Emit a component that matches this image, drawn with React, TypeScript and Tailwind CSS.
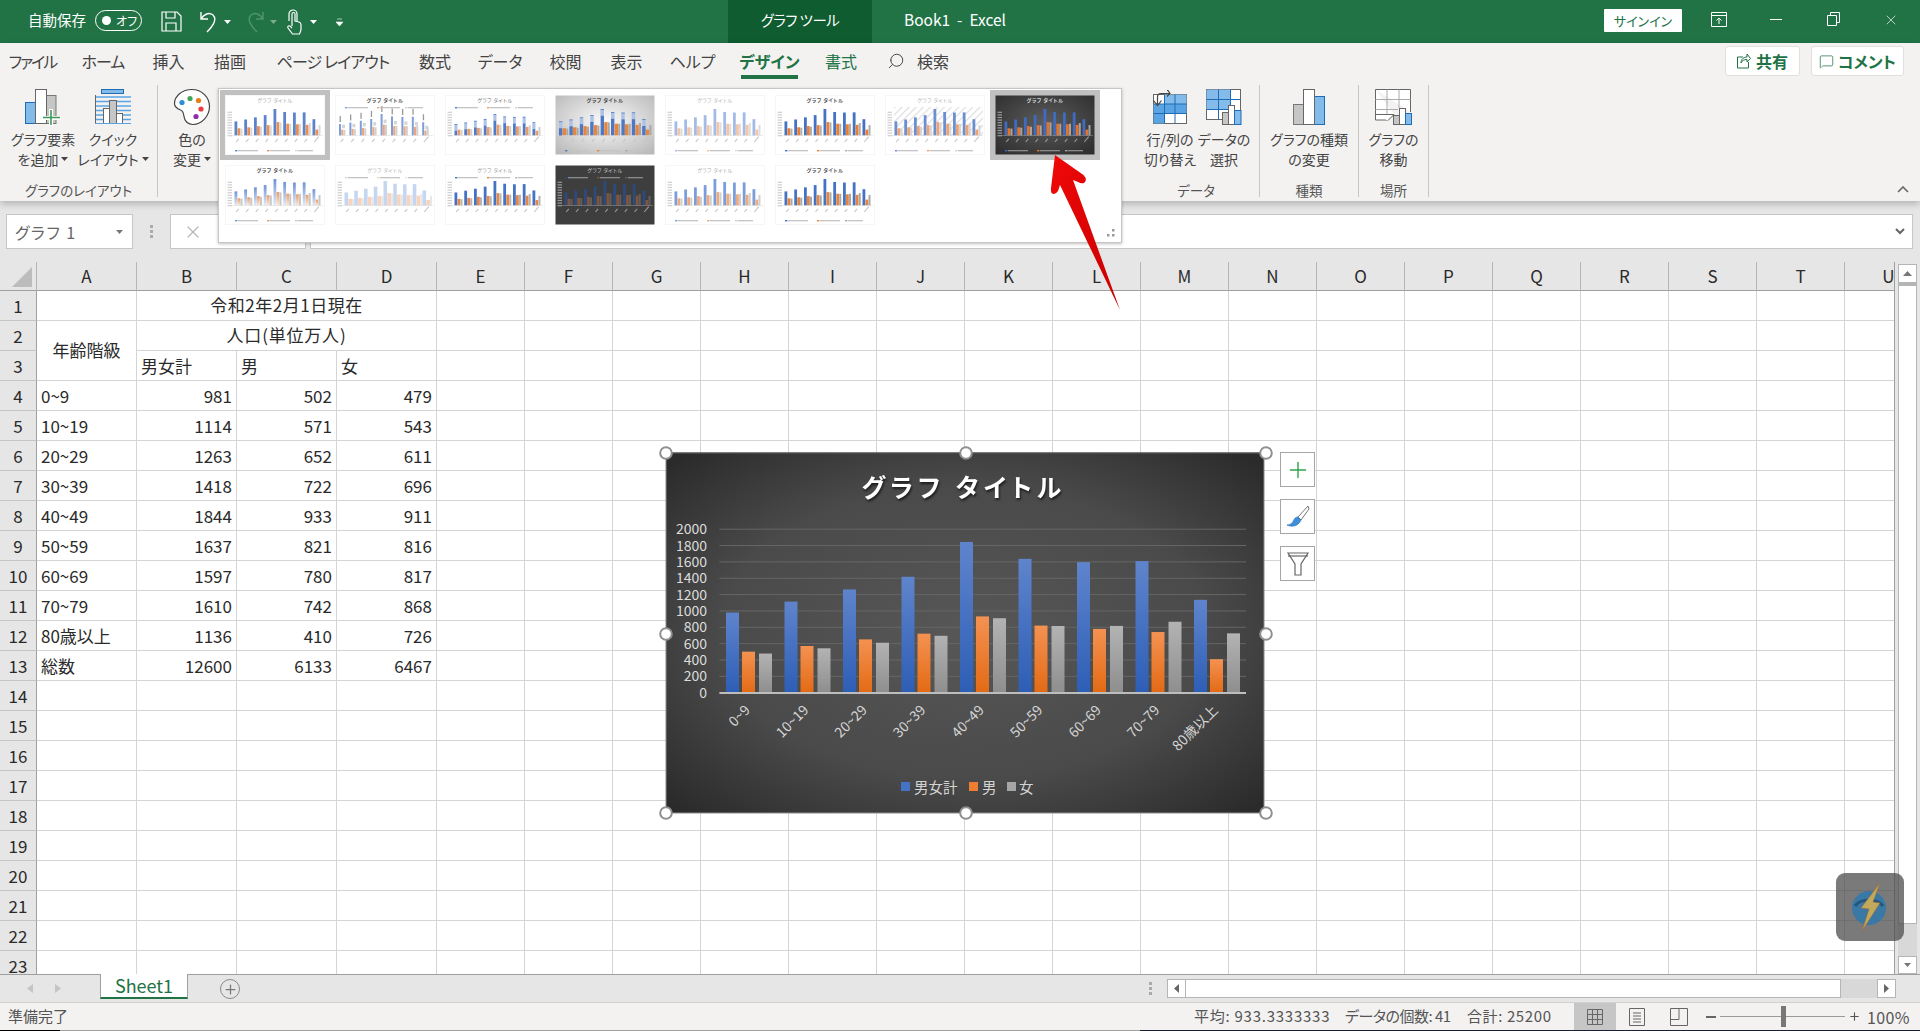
import React from "react";
import { Search, MessageSquare, Plus, X } from "lucide-react";

const FONT = "font-['Noto_Sans_CJK_JP','Liberation_Sans',sans-serif]";
const cats = ["0~9", "10~19", "20~29", "30~39", "40~49", "50~59", "60~69", "70~79", "80歳以上"];
const blue = [981, 1114, 1263, 1418, 1844, 1637, 1597, 1610, 1136];
const orange = [502, 571, 652, 722, 933, 821, 780, 742, 410];
const gray = [479, 543, 611, 696, 911, 816, 817, 868, 726];
const cols = ["E", "F", "G", "H", "I", "J", "K", "L", "M", "N", "O", "P", "Q", "R", "S", "T", "U"];

type TS = {
  bg?: string; grad?: string[]; title: string; bold?: boolean; b: string; o: string; g: string;
  legendTop?: boolean; labels?: "v" | "h"; noAxis?: boolean; bw?: number; fade?: boolean; hatch?: boolean; dark?: boolean; sel?: boolean;
};

const thumbs: TS[] = [
  { title: "#a9a9a9", b: "#5c84cc", o: "#e98f55", g: "#d8d8d8", sel: true },
  { title: "#555", bold: true, b: "#7e9fd9", o: "#eda67c", g: "#cfcfcf", legendTop: true, labels: "v", noAxis: true, bw: 2 },
  { title: "#777", b: "#4f7cc8", o: "#e99b68", g: "#d0d0d0", legendTop: true, labels: "h" },
  { grad: ["#fbfbfb", "#b9b9b9"], title: "#444", bold: true, b: "#4d79c4", o: "#e9843f", g: "#a8a8a8", labels: "h", noAxis: true, bw: 3.4 },
  { title: "#b5b5b5", b: "#a3bbe6", o: "#f3c4a6", g: "#dddddd" },
  { title: "#555", bold: true, b: "#4472c4", o: "#ed7d31", g: "#b0b0b0" },
  { title: "#b5b5b5", b: "#6b8fd0", o: "#eea271", g: "#d5d5d5", hatch: true },
  { grad: ["#5c5c5c", "#2e2e2e"], title: "#d8d8d8", bold: true, b: "#3f6cc0", o: "#e5742a", g: "#a5a5a5", dark: true, sel: true },
  { title: "#555", bold: true, b: "#6f93d6", o: "#eb9a63", g: "#c8c8c8", fade: true },
  { title: "#b5b5b5", b: "#c7d6f0", o: "#f6d3bc", g: "#e6e6e6", legendTop: true, bw: 3.6 },
  { title: "#999", b: "#4472c4", o: "#e5854a", g: "#b5b5b5", legendTop: true },
  { bg: "#3e3e3e", title: "#c8c8c8", b: "#2c4a7e", o: "#82553a", g: "#5e5e5e", dark: true, legendTop: true },
  { title: "#aaa", b: "#7c9ddb", o: "#eeaa7e", g: "#cfcfcf" },
  { title: "#555", bold: true, b: "#4472c4", o: "#e5843f", g: "#a8a8a8" },
];

function Thumb({ s, id }: { s: TS; id: string }) {
  const base = 40.5;
  const bw = s.bw ?? 2.8;
  const top = s.legendTop ? (s.labels ? 19 : 16) : 14;
  const k = (base - top) / 1844;
  const x0 = s.noAxis ? 4 : 9.5;
  const step = s.noAxis ? 10.4 : 9.75;
  const fill = (c: string, n: string) => (s.fade ? `url(#${id}${n})` : c);
  const legendY = s.legendTop ? 12 : 55;
  const smudge = s.dark ? "#8a8a8a" : "#c4c4c4";
  return (
    <svg width="100" height="60" viewBox="0 0 100 60" className="block">
      <defs>
        {s.grad && (
          <radialGradient id={`${id}bg`} cx="50%" cy="45%" r="70%">
            <stop offset="0%" stopColor={s.grad[0]} />
            <stop offset="100%" stopColor={s.grad[1]} />
          </radialGradient>
        )}
        {s.fade && (
          <>
            <linearGradient id={`${id}b`} x1="0" y1="0" x2="0" y2="1"><stop offset="0" stopColor={s.b} /><stop offset="1" stopColor="#e4ebf8" /></linearGradient>
            <linearGradient id={`${id}o`} x1="0" y1="0" x2="0" y2="1"><stop offset="0" stopColor={s.o} /><stop offset="1" stopColor="#fbe9dc" /></linearGradient>
          </>
        )}
        {s.hatch && (
          <pattern id={`${id}h`} width="5" height="5" patternUnits="userSpaceOnUse" patternTransform="rotate(45)">
            <rect width="1.2" height="5" fill="#dedede" />
          </pattern>
        )}
      </defs>
      <rect x="0.5" y="0.5" width="99" height="59" fill={s.grad ? `url(#${id}bg)` : s.bg ?? "#fff"} stroke={s.grad || s.bg ? "none" : "#f6f6f6"} />
      {s.hatch && <rect x="9" y="12" width="89" height="29" fill={`url(#${id}h)`} />}
      <text x="50" y="6.5" textAnchor="middle" fontSize="5" fontWeight={s.bold ? 700 : 400} fill={s.title} letterSpacing="0.5">グラフ タイトル</text>
      {!s.noAxis && Array.from({ length: 10 }).map((_, i) => <rect key={i} x="2.5" y={base - i * 2.6 - 0.4} width="4.5" height="1.2" fill={s.dark ? "#9a9a9a" : "#cfcfcf"} />)}
      {blue.map((v, i) => {
        const x = x0 + i * step;
        return (
          <g key={i}>
            <rect x={x} y={base - v * k} width={bw} height={v * k} fill={fill(s.b, "b")} />
            <rect x={x + bw + 0.2} y={base - orange[i] * k} width={bw} height={orange[i] * k} fill={fill(s.o, "o")} />
            <rect x={x + 2 * bw + 0.4} y={base - gray[i] * k} width={Math.min(bw, 2)} height={gray[i] * k} fill={s.g} />
            {s.labels === "v" && <rect x={x + 0.6} y={base - v * k - 8} width="1.3" height="6" fill="#9a9a9a" />}
            {s.labels === "v" && <rect x={x + bw + 1} y={base - orange[i] * k - 5} width="3" height="3.5" fill="#d5d5d5" />}
            {s.labels === "h" && <rect x={x - 0.2} y={base - v * k + 0.8} width={bw + 0.4} height="6" fill="#ffffff" opacity="0.55" />}
            <rect x={x + 1} y="44" width={i === 8 ? 7 : 4} height="1.1" fill={s.dark ? "#9a9a9a" : "#c4c4c4"} transform={`rotate(-50 ${x + 4} 45)`} />
          </g>
        );
      })}
      <rect x="7" y={base} width="91" height="0.5" fill={s.dark ? "#999" : "#d8d8d8"} />
      {[[10, s.b], [42, s.o], [70, s.g]].map(([x, c], i) => (
        <g key={i}>
          <rect x={x as number} y={legendY} width="2.4" height="1.4" fill={c as string} />
          <rect x={(x as number) + 3} y={legendY} width={i === 2 ? 15 : 20} height="1.3" fill={smudge} />
        </g>
      ))}
    </svg>
  );
}

function ChartSvg() {
  const y = (v: number) => 239.7 - v * 0.08175;
  return (
    <svg width="600" height="360" viewBox="0 0 600 360" className="block overflow-visible">
      <defs>
        <radialGradient id="cbg" cx="50%" cy="50%" r="68%">
          <stop offset="0%" stopColor="#575757" />
          <stop offset="60%" stopColor="#4a4a4a" />
          <stop offset="100%" stopColor="#2b2b2b" />
        </radialGradient>
        <linearGradient id="gb" x1="0" y1="0" x2="0" y2="1"><stop offset="0" stopColor="#5f84cc" /><stop offset="1" stopColor="#2d5eb6" /></linearGradient>
        <linearGradient id="go" x1="0" y1="0" x2="0" y2="1"><stop offset="0" stopColor="#f49252" /><stop offset="1" stopColor="#e36a14" /></linearGradient>
        <linearGradient id="gg" x1="0" y1="0" x2="0" y2="1"><stop offset="0" stopColor="#b3b3b3" /><stop offset="1" stopColor="#8e8e8e" /></linearGradient>
      </defs>
      <rect x="0" y="0" width="598" height="360" fill="url(#cbg)" stroke="#8c8c8c" />
      <line x1="0" y1="0" x2="598" y2="0" stroke="#333" />
      <text x="298" y="44" textAnchor="middle" fontSize="25" fontWeight="700" fill="#fff" letterSpacing="5" style={{ filter: "drop-shadow(1px 2px 1px rgba(0,0,0,.6))" }}>グラフ タイトル</text>
      {Array.from({ length: 11 }).map((_, i) => (
        <g key={i}>
          {i > 0 && <line x1="53.4" x2="580" y1={y(i * 200)} y2={y(i * 200)} stroke="#666" />}
          <text x="41" y={y(i * 200) + 5} textAnchor="end" fontSize="14" fill="#dcdcdc">{i * 200}</text>
        </g>
      ))}
      {blue.map((v, i) => {
        const x = 60 + i * 58.5;
        return (
          <g key={i}>
            <rect x={x} y={y(v)} width="13" height={v * 0.08175} fill="url(#gb)" />
            <rect x={x + 16} y={y(orange[i])} width="13" height={orange[i] * 0.08175} fill="url(#go)" />
            <rect x={x + 33} y={y(gray[i])} width="13" height={gray[i] * 0.08175} fill="url(#gg)" />
          </g>
        );
      })}
      <line x1="53.4" x2="580" y1="240" y2="240" stroke="#bdbdbd" strokeWidth="2" />
      {cats.map((c, i) => {
        const x = 85 + i * 58.5;
        return (
          <text key={c} x={x} y="258" textAnchor="end" fontSize="14" fill="#d4d4d4" transform={`rotate(-45 ${x} 258)`}>{c}</text>
        );
      })}
      <rect x="235" y="329" width="9" height="9" fill="#4472c4" />
      <text x="248" y="340" fontSize="14.5" fill="#d4d4d4">男女計</text>
      <rect x="303" y="329" width="9" height="9" fill="#ed7d31" />
      <text x="316" y="340" fontSize="14.5" fill="#d4d4d4">男</text>
      <rect x="341" y="329" width="9" height="9" fill="#a5a5a5" />
      <text x="353" y="340" fontSize="14.5" fill="#d4d4d4">女</text>
      {[[0, 0], [300, 0], [600, 0], [0, 181], [600, 181], [0, 360], [300, 360], [600, 360]].map(([cx, cy], i) => (
        <circle key={i} cx={cx} cy={cy} r="5.8" fill="#fff" stroke="#8f8f8f" strokeWidth="2" />
      ))}
    </svg>
  );
}

function Caret({ c = "#444" }: { c?: string }) {
  return <svg width="7" height="4" viewBox="0 0 7 4" className="inline-block"><path d="M0 0h7L3.5 4z" fill={c} /></svg>;
}

function Tab({ label, cls, active, green }: { label: string; cls: string; active?: boolean; green?: boolean }) {
  return (
    <div className={`h-[36px] flex items-center justify-center whitespace-nowrap border-y-4 border-t-transparent ${active ? "border-b-[#217346] font-bold text-[#217346]" : "border-b-transparent"} ${green ? "text-[#217346]" : active ? "" : "text-[#444]"} ${cls}`}>
      {label}
    </div>
  );
}

function RibbonBtn({ icon, l1, l2, caret, cls }: { icon: React.ReactNode; l1: string; l2: string; caret?: boolean; cls: string }) {
  return (
    <div className={`flex flex-col items-center ${cls}`}>
      <div className="h-[38px] flex items-end justify-center">{icon}</div>
      <div className="mt-[3px] text-[14px] leading-[20px] text-[#444] whitespace-nowrap text-center">
        <div>{l1}</div>
        <div className="flex items-center justify-center gap-[3px]">{l2}{caret && <Caret />}</div>
      </div>
    </div>
  );
}

function Group({ cls, label, children }: { cls: string; label: string; children: React.ReactNode }) {
  return (
    <div className={`relative mt-[6px] h-[112px] border-r border-[#c8c6c4] flex flex-col justify-between ${cls}`}>
      <div className="flex pt-[3px]">{children}</div>
      <div className="text-center text-[13.5px] leading-[14px] text-[#555] whitespace-nowrap">{label}</div>
    </div>
  );
}

const IconAddElem = () => (
  <svg width="40" height="38" viewBox="0 0 40 38">
    <rect x="2.5" y="14.5" width="10" height="21" fill="#83bbeb" stroke="#1e6cb5" />
    <rect x="23" y="7.5" width="10" height="28" fill="#c6c6c6" stroke="#777" />
    <rect x="12.5" y="1.5" width="11" height="34" fill="#fff" stroke="#666" />
    <path d="M28 21v18M19 30h19" stroke="#fff" strokeWidth="4" />
    <path d="M28 22v15M20 29.500h17" stroke="#3c9a58" strokeWidth="1.6" />
  </svg>
);
const IconQuick = () => (
  <svg width="38" height="38" viewBox="0 0 38 38">
    <rect x="7.500" y="1.500" width="22" height="4" fill="#83bbeb" stroke="#1e6cb5" />
    {[9, 13.5, 18, 22.5, 27, 31.5].map((y) => <line key={y} x1="2" x2="37" y1={y} y2={y} stroke="#5aa4e3" strokeWidth="1.6" />)}
    <line x1="1.500" x2="1.500" y1="7" y2="36" stroke="#666" />
    <rect x="9.500" y="20.500" width="6" height="15" fill="#fff" stroke="#666" />
    <rect x="15.500" y="12.500" width="7" height="23" fill="#c6c6c6" stroke="#666" />
    <rect x="22.500" y="25.500" width="6" height="10" fill="#fff" stroke="#666" />
    <line x1="1" x2="37" y1="35.500" y2="35.500" stroke="#5aa4e3" />
  </svg>
);
const IconPalette = () => (
  <svg width="38" height="38" viewBox="0 0 38 38">
    <path d="M19 1.500C9 1.500 1.500 8 1.500 15.500c0 4 3.500 5.500 6 6.500 3 1 3 3.500 3.500 6.500C11.500 33 15 36.500 20 36.500c9 0 16.500-9 16.500-18S29 1.500 19 1.500z" fill="#fff" stroke="#444" strokeWidth="1.2" />
    <circle cx="9" cy="14.500" r="2.600" fill="#2a8fd8" />
    <circle cx="17" cy="10.500" r="2.600" fill="#44a35b" />
    <circle cx="25.500" cy="12.500" r="2.600" fill="#e67e14" />
    <circle cx="28" cy="21" r="2.600" fill="#ea3d3d" />
    <circle cx="23" cy="28.500" r="2.600" fill="#8e2ea8" />
  </svg>
);
const IconSwitch = () => (
  <svg width="38" height="38" viewBox="0 0 38 38">
    <rect x="2.500" y="6.500" width="33" height="29" fill="#fff" stroke="#666" />
    <rect x="2.500" y="16" width="33" height="9.500" fill="#5aa4e3" />
    <rect x="2.500" y="25.500" width="11" height="10" fill="#5aa4e3" />
    <rect x="24" y="6.500" width="11.500" height="9.500" fill="#83bbeb" />
    <rect x="13.500" y="6.500" width="10.500" height="9.500" fill="#83bbeb" />
    <path d="M2.500 16H35.500M2.500 25.500H35.500M13.500 6.500V35.500M24 6.500V35.500" stroke="#1e6cb5" />
    <path d="M16 2.500l1 0 2 3-3 3M18.500 5.500H10C8 5.500 6.500 7 6.500 9v7M2.500 12.500l4 5 4-5" fill="none" stroke="#444" strokeWidth="1.2" />
  </svg>
);
const IconSelect = () => (
  <svg width="38" height="38" viewBox="0 0 38 38">
    <rect x="1.500" y="1.500" width="34" height="30" fill="#fff" stroke="#666" />
    <rect x="1.500" y="1.500" width="24" height="20" fill="#83bbeb" />
    <path d="M1.500 11.500H35.500M1.500 21.500H25.500M13.500 1.500V31.500M25.500 1.500V20" stroke="#1e6cb5" />
    <rect x="17.500" y="24.500" width="6" height="12" fill="#c6c6c6" stroke="#666" />
    <rect x="23.500" y="17.500" width="6" height="19" fill="#fff" stroke="#666" />
    <rect x="29.500" y="22.500" width="6.500" height="14" fill="#83bbeb" stroke="#1e6cb5" />
  </svg>
);
const IconType = () => (
  <svg width="34" height="38" viewBox="0 0 34 38">
    <rect x="1.500" y="16.500" width="10" height="20" fill="#c6c6c6" stroke="#777" />
    <rect x="22.500" y="8.500" width="10" height="28" fill="#83bbeb" stroke="#1e6cb5" />
    <rect x="11.500" y="1.500" width="11" height="35" fill="#fff" stroke="#666" />
  </svg>
);
const IconMove = () => (
  <svg width="40" height="38" viewBox="0 0 40 38">
    <path d="M1.500 1.500H36.500V24M1.500 1.500V32H14l6-6" fill="#fff" stroke="#666" />
    <path d="M1.500 11.500H36.500M1.500 21.500H24M13 1.500V30M25 1.500V20" stroke="#aaa" />
    <path d="M1.500 26.500H20l-6 6" fill="#fff" stroke="#666" />
    <rect x="19.500" y="27.500" width="6" height="9" fill="#c6c6c6" stroke="#666" />
    <rect x="25.500" y="20.500" width="6" height="16" fill="#fff" stroke="#666" />
    <rect x="31.500" y="25.500" width="6" height="11" fill="#83bbeb" stroke="#1e6cb5" />
  </svg>
);

function Cell({ children, cls = "" }: { children?: React.ReactNode; cls?: string }) {
  return <div className={`bg-white border-r border-b border-[#d4d4d4] flex items-center px-[4px] whitespace-nowrap overflow-hidden ${cls}`}>{children}</div>;
}
const Hdr = ({ children, cls = "" }: { children?: React.ReactNode; cls?: string }) => (
  <div className={`bg-[#e6e6e6] flex items-center justify-center ${cls}`}>{children}</div>
);
const Blanks = () => <>{cols.map((c) => <Cell key={c} />)}</>;

function Sheet() {
  const rows: [string, number | string, number | string, number | string][] = cats.map((c, i) => [c, blue[i], orange[i], gray[i]]);
  rows.push(["総数", 12600, 6133, 6467]);
  const rowHdr = "border-r border-r-[#9f9f9f] border-b border-b-[#c4c4c4]";
  return (
    <div className="grid grid-cols-[37px_100px_100px_100px_100px_repeat(17,88px)] grid-rows-[29px] auto-rows-[30px] text-[17px] leading-[24px] text-[#2a2a2a]">
      <Hdr cls="border-r border-r-[#b5b5b5] border-b border-b-[#9f9f9f]">
        <svg width="36" height="28" viewBox="0 0 36 28"><path d="M12 25 L32 25 L32 5 Z" fill="#bcbcbc" /></svg>
      </Hdr>
      {["A", "B", "C", "D", ...cols].map((c) => (
        <Hdr key={c} cls="border-r border-r-[#b5b5b5] border-b border-b-[#9f9f9f]">{c}</Hdr>
      ))}
      <Hdr cls={rowHdr}>1</Hdr>
      <Cell />
      <Cell cls="col-span-3 justify-center tracking-[0.5px] pb-[2px]">令和2年2月1日現在</Cell>
      <Blanks />
      <Hdr cls={rowHdr}>2</Hdr>
      <Cell cls="row-span-2 justify-center pb-[2px]">年齢階級</Cell>
      <Cell cls="col-span-3 justify-center tracking-[0.8px] pb-[2px]">人口(単位万人)</Cell>
      <Blanks />
      <Hdr cls={rowHdr}>3</Hdr>
      <Cell>男女計</Cell>
      <Cell>男</Cell>
      <Cell>女</Cell>
      <Blanks />
      {rows.map((r, i) => (
        <React.Fragment key={i}>
          <Hdr cls={rowHdr}>{i + 4}</Hdr>
          <Cell>{r[0]}</Cell>
          <Cell cls="justify-end">{r[1]}</Cell>
          <Cell cls="justify-end">{r[2]}</Cell>
          <Cell cls="justify-end">{r[3]}</Cell>
          <Blanks />
        </React.Fragment>
      ))}
      {Array.from({ length: 10 }).map((_, i) => (
        <React.Fragment key={i}>
          <Hdr cls={rowHdr}>{i + 14}</Hdr>
          <Cell /><Cell /><Cell /><Cell />
          <Blanks />
        </React.Fragment>
      ))}
    </div>
  );
}

export default function App() {
  return (
    <div className={`relative w-[1920px] h-[1031px] overflow-hidden flex flex-col bg-[#e6e6e6] ${FONT} [font-feature-settings:'palt']`}>
      {/* title bar */}
      <div className="h-[43px] shrink-0 bg-[#217346] flex items-center text-white">
        <div className="w-[728px] shrink-0 flex items-center">
          <span className="ml-[28px] w-[60px] text-[14.5px] whitespace-nowrap -translate-y-[2px]">自動保存</span>
          <div className="ml-[7px] w-[47px] h-[21px] -translate-y-px rounded-full border border-white flex items-center pl-[6px] gap-[5px]">
            <span className="w-[9px] h-[9px] rounded-full bg-white" />
            <span className="text-[12px] leading-none">オフ</span>
          </div>
          <svg className="ml-[19px]" width="21" height="21" viewBox="0 0 21 21" fill="none" stroke="#fff" strokeWidth="1.2">
            <path d="M1 1h15l4 4v15H1z" /><path d="M5 1v6h9V1M5 20v-8h10v8" />
          </svg>
          <svg className="ml-[17px]" width="19" height="24" viewBox="0 0 19 24" fill="none" stroke="#fff" strokeWidth="1.4">
            <path d="M2 2v7h7M2 9c3-5 8-7 12-4 4 4 1 10-6 17" />
          </svg>
          <span className="ml-[6px] flex"><Caret c="#fff" /></span>
          <svg className="ml-[15px] opacity-50" width="19" height="24" viewBox="0 0 19 24" fill="none" stroke="#7fb59a" strokeWidth="1.4">
            <path d="M17 2v7h-7M17 9c-3-5-8-7-12-4-4 4-1 10 6 17" />
          </svg>
          <span className="ml-[5px] flex opacity-40"><Caret c="#fff" /></span>
          <svg className="ml-[9px]" width="16" height="26" viewBox="0 0 16 26" fill="none" stroke="#fff" strokeWidth="1.2">
            <path d="M3 12V5a4 4 0 0 1 8 0v7" />
            <path d="M6 17V5a1.500 1.500 0 0 1 3 0v7l4 1c1.500.5 2 1.500 2 3v4c0 2-1 4-1.500 5H6.500L2 19c-1-2 1-3 2.500-1.500L6 19" />
          </svg>
          <span className="ml-[8px] flex"><Caret c="#fff" /></span>
          <svg className="ml-[19px]" width="7" height="8" viewBox="0 0 7 8"><path d="M1 1h5M0 4h7L3.500 8z" fill="#fff" stroke="#fff" strokeWidth="0.6" /></svg>
        </div>
        <div className="w-[144px] h-full shrink-0 bg-[#0f5c30] flex items-center justify-center text-[14.5px] pb-[3px] tracking-[-0.5px]">グラフ ツール</div>
        <div className="ml-[32px] text-[15.5px] whitespace-pre pb-[3px]">Book1  -  Excel</div>
        <div className="ml-auto w-[78px] h-[23px] -translate-y-px bg-white text-[#217346] text-[13px] flex items-center justify-center rounded-[1px]">サインイン</div>
        <div className="ml-[8px] flex -translate-y-[2px]">
          <div className="w-[57.5px] flex justify-center">
            <svg width="16" height="15" viewBox="0 0 16 15" fill="none" stroke="#fff"><path d="M.5.5h15v14H.5zM.5 3.500h15M8 12V6M5.500 8.500L8 6l2.500 2.500" /></svg>
          </div>
          <div className="w-[57.5px] flex items-center justify-center"><div className="w-[12px] h-px bg-white" /></div>
          <div className="w-[57.5px] flex justify-center">
            <svg width="13" height="14" viewBox="0 0 13 14" fill="none" stroke="#fff"><path d="M.5 3.500h9v10h-9zM3.500 3.500V.5h9v10H9.500" /></svg>
          </div>
          <div className="w-[57.5px] flex justify-center"><X className="text-white" size={16} strokeWidth={1} /></div>
        </div>
      </div>

      {/* ribbon */}
      <div className="relative z-20 h-[158px] shrink-0 bg-[#f3f2f1] shadow-[0_3px_7px_rgba(0,0,0,0.22)] flex flex-col">
        <div className="h-[36px] flex items-center text-[16px]">
          <Tab label="ファイル" cls="ml-[10px] w-[45px] tracking-[-2px]" />
          <Tab label="ホーム" cls="ml-[27px] w-[42px] tracking-[-1px]" />
          <Tab label="挿入" cls="ml-[28px] w-[33px]" />
          <Tab label="描画" cls="ml-[28px] w-[34px]" />
          <Tab label="ページ レイアウト" cls="ml-[30px] w-[112px] tracking-[-0.9px]" />
          <Tab label="数式" cls="ml-[29px] w-[34px]" />
          <Tab label="データ" cls="ml-[28px] w-[40px]" />
          <Tab label="校閲" cls="ml-[29px] w-[33px]" />
          <Tab label="表示" cls="ml-[28px] w-[33px]" />
          <Tab label="ヘルプ" cls="ml-[29px] w-[41px]" />
          <Tab label="デザイン" cls="ml-[28px] w-[57px]" active />
          <Tab label="書式" cls="ml-[26px] w-[34px]" green />
          <Search className="ml-[29px] -scale-x-100 text-[#444]" size={18} strokeWidth={1.3} />
          <span className="ml-[12px] text-[#444]">検索</span>
          <div className="ml-auto mr-[16px] flex gap-[11px] text-[#217346] font-bold text-[16px]">
            <div className="w-[75px] h-[30px] bg-white border border-[#e1dfdd] rounded-[3px] flex items-center justify-center gap-[5px]">
              <svg width="14" height="16" viewBox="0 0 14 16" fill="none" stroke="#217346"><path d="M6 4H.5v11h11V9M4 10c0-4 3-6 6-6V1l3.500 4.500L10 9V6.500c-3 0-5 1-6 3.500z" /></svg>
              共有
            </div>
            <div className="w-[93px] h-[30px] bg-white border border-[#e1dfdd] rounded-[3px] flex items-center justify-center gap-[4px]">
              <MessageSquare size={15} strokeWidth={1.2} />
              コメント
            </div>
          </div>
        </div>
        <div className="flex-1 flex">
          <Group cls="w-[158px]" label="グラフのレイアウト">
            <RibbonBtn cls="ml-[8px] w-[70px]" icon={<IconAddElem />} l1="グラフ要素" l2="を追加" caret />
            <RibbonBtn cls="w-[70px]" icon={<IconQuick />} l1="クイック" l2="レイアウト" caret />
          </Group>
          <div className="mt-[6px] w-[975px] flex pt-[3px]">
            <RibbonBtn cls="ml-[1px] w-[66px]" icon={<IconPalette />} l1="色の" l2="変更" caret />
          </div>
          <Group cls="w-[127px]" label="データ">
            <RibbonBtn cls="ml-[4px] w-[66px]" icon={<IconSwitch />} l1="行/列の" l2="切り替え" />
            <RibbonBtn cls="w-[42px]" icon={<IconSelect />} l1="データの" l2="選択" />
          </Group>
          <Group cls="w-[99px]" label="種類">
            <RibbonBtn cls="w-full" icon={<IconType />} l1="グラフの種類" l2="の変更" />
          </Group>
          <Group cls="w-[70px]" label="場所">
            <RibbonBtn cls="w-full" icon={<IconMove />} l1="グラフの" l2="移動" />
          </Group>
          <svg className="ml-auto mr-[11px] mt-[107px]" width="12" height="7" viewBox="0 0 12 7" fill="none" stroke="#666" strokeWidth="1.6"><path d="M1 6l5-5 5 5" /></svg>
        </div>
      </div>

      {/* formula bar */}
      <div className="h-[61px] shrink-0 flex items-start pt-[13px] text-[#444]">
        <div className="ml-[6px] w-[127px] h-[35px] bg-white border border-[#c8c6c4] flex items-center pl-[8px] pr-[9px] justify-between text-[16px] text-[#666]">
          <span className="tracking-[1.5px]">グラフ 1</span><Caret c="#777" />
        </div>
        <div className="w-[37px] h-[35px] flex flex-col items-center justify-center gap-[2px]">
          <span className="w-[3px] h-[3px] bg-[#aaa]" /><span className="w-[3px] h-[3px] bg-[#aaa]" /><span className="w-[3px] h-[3px] bg-[#aaa]" />
        </div>
        <div className="w-[136px] h-[35px] bg-white border border-[#c8c6c4] pl-[12px] flex items-center"><X className="text-[#b8b8b8]" size={20} strokeWidth={1.5} /></div>
        <div className="ml-[4px] w-[1603px] h-[35px] bg-white border border-[#c8c6c4] flex items-center justify-end pr-[7px]">
          <svg width="10" height="7" viewBox="0 0 10 7" fill="none" stroke="#666" strokeWidth="2"><path d="M1 1l4 4 4-4" /></svg>
        </div>
      </div>

      {/* sheet */}
      <div className="flex-1 min-h-0 flex">
        <div className="relative w-[1895px] overflow-hidden border-r border-[#9f9f9f]">
          <Sheet />
          <div className="absolute left-[666px] top-[191px]"><ChartSvg /></div>
          {[
            { cls: "top-[190px]", icon: <Plus className="text-[#2fa34f]" size={26} strokeWidth={1.3} /> },
            {
              cls: "top-[237px]",
              icon: (
                <svg width="24" height="24" viewBox="0 0 24 24">
                  <path d="M22 1L12 12l3 3L23 4z" fill="#fff" stroke="#777" />
                  <path d="M12 12c-4 0-4 4-6 6-1 1-3 2-5 2 4 2 11 2 14-5z" fill="#3f8fdc" stroke="#1e6cb5" strokeWidth="0.6" />
                </svg>
              ),
            },
            {
              cls: "top-[284px]",
              icon: (
                <svg width="24" height="26" viewBox="0 0 24 26" fill="#fff" stroke="#666" strokeWidth="1.2">
                  <path d="M2 2h20l-7 11v11H9V13z" /><path d="M2 5h20" fill="none" />
                </svg>
              ),
            },
          ].map((b, i) => (
            <div key={i} className={`absolute left-[1280px] w-[35px] h-[35px] bg-white border border-[#a6a6a6] flex items-center justify-center ${b.cls}`}>{b.icon}</div>
          ))}
        </div>
        <div className="flex-1 flex flex-col pl-[3px] pr-[3px] pt-[2px]">
          <div className="h-[19px] bg-white border border-[#b5b5b5] flex items-center justify-center">
            <svg width="9" height="5" viewBox="0 0 9 5"><path d="M0 5h9L4.500 0z" fill="#777" /></svg>
          </div>
          <div className="h-[641px] bg-white border border-[#b5b5b5] border-t-[3px]" />
          <div className="flex-1 bg-[#d8d8d8]" />
          <div className="h-[18px] bg-white border border-[#b5b5b5] flex items-center justify-center"><Caret c="#777" /></div>
        </div>
      </div>

      {/* tabs bar */}
      <div className="h-[28px] shrink-0 border-t border-[#9f9f9f] bg-[#e6e6e6] flex items-start">
        <svg className="ml-[27px] mt-[9px]" width="6" height="9" viewBox="0 0 6 9"><path d="M6 0v9L0 4.500z" fill="#c4c4c4" /></svg>
        <svg className="ml-[22px] mt-[9px]" width="6" height="9" viewBox="0 0 6 9"><path d="M0 0v9l6-4.500z" fill="#c4c4c4" /></svg>
        <div className="ml-[39px] -mt-px w-[88px] h-[25px] bg-white border-x border-[#9f9f9f] border-b-2 border-b-[#217346] flex items-center justify-center text-[18px] leading-[20px] text-[#217346] pb-[2px]">Sheet1</div>
        <div className="ml-[32px] mt-[4px] w-[20px] h-[20px] rounded-full border border-[#8a8a8a] flex items-center justify-center"><Plus className="text-[#777]" size={15} strokeWidth={2} /></div>
        <div className="ml-[909px] mt-[7px] flex flex-col gap-[2px]">
          <span className="w-[3px] h-[3px] bg-[#aaa]" /><span className="w-[3px] h-[3px] bg-[#aaa]" /><span className="w-[3px] h-[3px] bg-[#aaa]" />
        </div>
        <div className="ml-[15px] mt-[4px] w-[729px] h-[19px] flex bg-[#d8d8d8]">
          <div className="w-[19px] bg-white border border-[#b5b5b5] flex items-center justify-center"><svg width="5" height="9" viewBox="0 0 5 9"><path d="M5 0v9L0 4.500z" fill="#666" /></svg></div>
          <div className="w-[655px] bg-white border-y border-r border-[#b5b5b5]" />
          <div className="ml-auto w-[19px] bg-white border border-[#b5b5b5] flex items-center justify-center"><svg width="5" height="9" viewBox="0 0 5 9"><path d="M0 0v9l5-4.500z" fill="#666" /></svg></div>
        </div>
      </div>

      {/* status bar */}
      <div className="h-[28px] shrink-0 bg-[#f3f2f1] border-t border-[#d0d0d0] flex items-center text-[15px] text-[#555]">
        <span className="ml-[8px]">準備完了</span>
        <div className="ml-auto flex items-center h-full">
          <span className="w-[151px] whitespace-nowrap tracking-[0.75px]">平均: 933.3333333</span>
          <span className="w-[122px] whitespace-nowrap tracking-[-0.5px]">データの個数: 41</span>
          <span className="w-[107px] whitespace-nowrap tracking-[0.6px]">合計: 25200</span>
          <div className="w-[42px] h-full bg-[#c6c6c6] flex items-center justify-center">
            <svg width="16" height="16" viewBox="0 0 16 16" fill="none" stroke="#666"><path d="M.5.5h15v15H.5zM5.500.5v15M10.500.5v15M.5 5.500h15M.5 10.500h15" /></svg>
          </div>
          <div className="w-[42px] flex items-center justify-center">
            <svg width="16" height="18" viewBox="0 0 16 18" fill="none" stroke="#666"><path d="M.5.5h15v17H.5zM4 5h8M4 8h8M4 11h8M4 14h8" /></svg>
          </div>
          <div className="w-[42px] flex items-center justify-center">
            <svg width="18" height="18" viewBox="0 0 18 18" fill="none" stroke="#666"><path d="M.5.5h17v17H.5zM.5 11.500H9M9 .5v11" /></svg>
          </div>
          <div className="w-[220px] flex items-center">
            <span className="ml-[6px] w-[10px] h-[2px] bg-[#666]" />
            <div className="relative ml-[4px] w-[125px] h-px bg-[#999]">
              <span className="absolute left-[61px] -top-[10px] w-[5px] h-[21px] bg-[#777]" />
            </div>
            <Plus className="ml-[3px] text-[#555]" size={13} strokeWidth={2} />
            <span className="ml-[6px] whitespace-nowrap text-[16px] tracking-[0.4px]">100%</span>
          </div>
        </div>
      </div>
      <div className="h-px shrink-0 flex bg-[#a0a0a0]">
        <div className="w-[60px] bg-black" />
        <div className="ml-auto w-[780px] bg-[#1a2030]" />
      </div>

      {/* chart-style gallery dropdown */}
      <div className="absolute z-30 left-[218px] top-[88px] w-[904px] h-[155px] bg-white border border-[#c8c6c4] shadow-[0_1px_3px_rgba(0,0,0,0.25)] p-px">
        <div className="grid grid-cols-[repeat(8,110px)] auto-rows-[70px]">
          {thumbs.map((s, i) => (
            <div key={i} className={`flex items-center justify-center ${s.sel ? "bg-[#c0c0c0]" : ""}`}>
              <Thumb s={s} id={`t${i}`} />
            </div>
          ))}
        </div>
        <svg className="absolute right-[6px] bottom-[5px]" width="8" height="8" viewBox="0 0 8 8" fill="#999"><rect x="5" width="2.500" height="2.500" /><rect y="5" width="2.500" height="2.500" /><rect x="5" y="5" width="2.500" height="2.500" /></svg>
      </div>

      {/* annotation arrow */}
      <svg className="absolute z-40 left-[1040px] top-[150px]" width="90" height="165" viewBox="1040 150 90 165">
        <defs>
          <linearGradient id="arw" x1="0" y1="0" x2="1" y2="1"><stop offset="0" stopColor="#f00808" /><stop offset="1" stopColor="#c80000" /></linearGradient>
        </defs>
        <path d="M1055 155 L1083.500 175 Q1088 180 1084 183 Q1081 184 1078 182 L1073 180 L1120 310 L1060 185 L1058 191 Q1055.500 195 1052 193.500 Q1050.500 192 1051 188 Z" fill="url(#arw)" />
      </svg>

      {/* floating app badge */}
      <div className="absolute z-30 left-[1836px] top-[873px] w-[68px] h-[68px] rounded-[9px] bg-[#4d4d4d]/75 flex items-center justify-center">
        <svg width="42" height="50" viewBox="0 0 42 50" className="opacity-85">
          <circle cx="20" cy="26" r="17" fill="#2f78ad" />
          <path d="M6 24c6-8 22-8 28 0" stroke="#16507f" strokeWidth="3" fill="none" />
          <path d="M31 1L12 26l8 1-7 22 18-28-7-1z" fill="#cdb257" stroke="#a86a2c" strokeWidth="0.6" />
        </svg>
      </div>
    </div>
  );
}
